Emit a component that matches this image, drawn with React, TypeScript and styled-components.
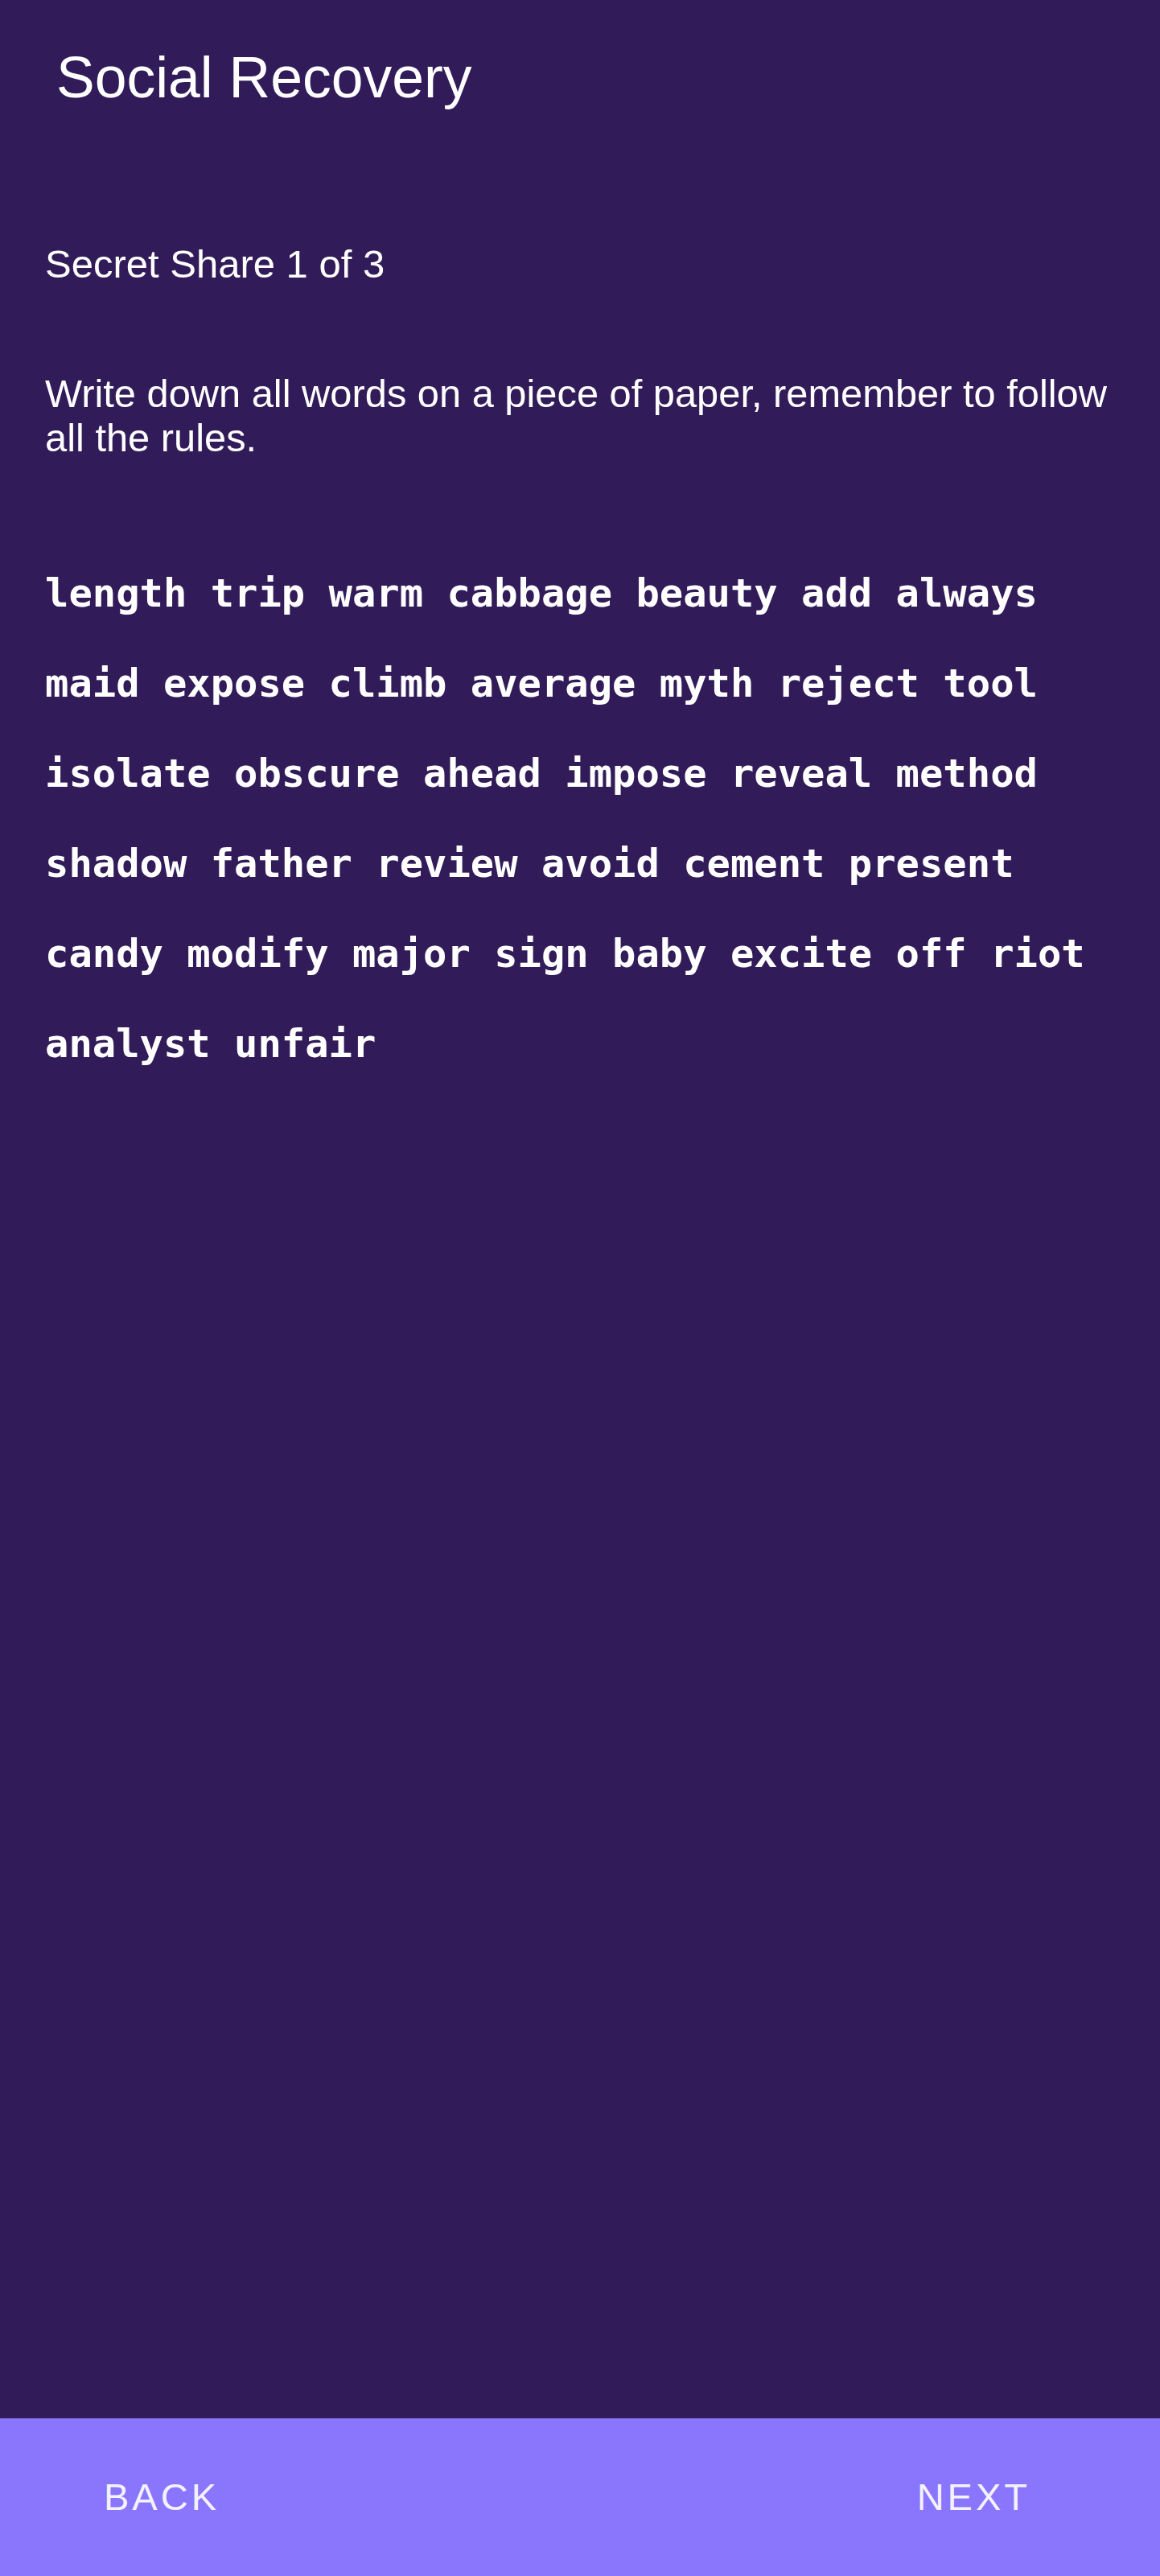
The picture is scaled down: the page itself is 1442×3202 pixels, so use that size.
import React from "react";
import styled, { createGlobalStyle } from "styled-components";

const GlobalStyle = createGlobalStyle`
  html, body {
    margin: 0;
    padding: 0;
    background: #311c59;
  }
  #root {
    min-height: 100vh;
  }
`;

const Screen = styled.div`
  min-height: 100vh;
  display: flex;
  flex-direction: column;
  background: #311c59;
  color: #ffffff;
  font-family: "Liberation Sans", Arial, sans-serif;
`;

const Header = styled.header`
  padding: 56px 0 0 70px;
`;

const Title = styled.h1`
  margin: 0;
  font-size: 71.5px;
  line-height: 80px;
  font-weight: 400;
  color: #ffffff;
`;

const Content = styled.main`
  flex: 1;
  display: flex;
  flex-direction: column;
  padding: 0 28px 0 56px;
`;

const Subtitle = styled.h2`
  margin: 164px 0 0;
  font-size: 49px;
  line-height: 56px;
  font-weight: 400;
  color: #ffffff;
`;

const Instructions = styled.p`
  margin: 106px 0 0;
  font-size: 48.8px;
  line-height: 55px;
  color: #ffffff;
`;

const WordList = styled.p`
  margin: 110px 0 0;
  font-family: "DejaVu Sans Mono", "Liberation Mono", monospace;
  font-weight: 700;
  font-size: 48.8px;
  line-height: 112px;
  color: #ffffff;
`;

const ButtonBar = styled.footer`
  height: 196px;
  flex-shrink: 0;
  display: flex;
  align-items: center;
  justify-content: space-between;
  padding: 0 161px 0 129px;
  background: #8a76fc;
`;

const NavButton = styled.button`
  border: none;
  background: transparent;
  padding: 0;
  font-family: "Liberation Sans", Arial, sans-serif;
  font-size: 47px;
  line-height: 56px;
  letter-spacing: 4px;
  text-transform: uppercase;
  color: rgba(255, 255, 255, 0.93);
  cursor: pointer;
`;

const words =
  "length trip warm cabbage beauty add always maid expose climb average myth reject tool isolate obscure ahead impose reveal method shadow father review avoid cement present candy modify major sign baby excite off riot analyst unfair";

export default function App() {
  return (
    <Screen>
      <GlobalStyle />
      <Header>
        <Title>Social Recovery</Title>
      </Header>
      <Content>
        <Subtitle>Secret Share 1 of 3</Subtitle>
        <Instructions>
          Write down all words on a piece of paper, remember to follow all the rules.
        </Instructions>
        <WordList>{words}</WordList>
      </Content>
      <ButtonBar>
        <NavButton>Back</NavButton>
        <NavButton>Next</NavButton>
      </ButtonBar>
    </Screen>
  );
}
